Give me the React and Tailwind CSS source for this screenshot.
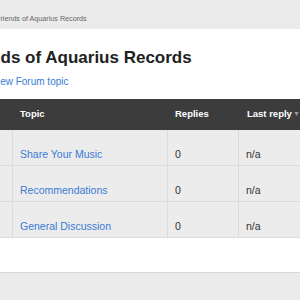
import React from "react";

const topics = [
  { title: "Share Your Music", replies: 0, last: "n/a" },
  { title: "Recommendations", replies: 0, last: "n/a" },
  { title: "General Discussion", replies: 0, last: "n/a" },
];

function App() {
  return (
    <div className="w-[300px] h-[300px] overflow-hidden bg-white flex flex-col font-['Liberation_Sans',Arial,sans-serif]">
      {/* breadcrumb bar */}
      <div className="h-[29px] shrink-0 bg-[#ebebeb] pt-[14px]">
        <p className="ml-[-4px] text-[7.2px] leading-[9px] text-[#666] whitespace-nowrap">Friends of Aquarius Records</p>
      </div>

      <h1 className="mt-[19px] ml-[-41px] text-[17px] leading-[20px] font-bold text-[#222] whitespace-nowrap">
        Friends of Aquarius Records
      </h1>
      <a href="#" className="mt-[8px] ml-[-26px] text-[10px] leading-[12px] text-[#3a7bd5] whitespace-nowrap">
        Add new Forum topic
      </a>

      <div className="mt-[11px] ml-[-20px] w-[360px]">
        <div className="grid grid-cols-[33px_155px_71px_101px] h-[31px] bg-[#3c3c3c] text-white text-[9.5px] font-bold items-center">
          <div />
          <div className="pl-[7px]">Topic</div>
          <div className="pl-[7px]">Replies</div>
          <div className="pl-[8px] flex items-center">
            Last reply
            <span className="ml-[1px] text-[7px] text-[#999]">▼</span>
          </div>
        </div>
        {topics.map((t) => (
          <div
            key={t.title}
            className="grid grid-cols-[33px_155px_71px_101px] h-[36px] bg-[#ececec] border-b border-[#dcdcdc] text-[10.5px] leading-[14px]"
          >
            <div className="border-r border-[#dcdcdc]" />
            <div className="pl-[7px] pt-[17px] border-r border-[#dcdcdc]">
              <a href="#" className="text-[#3a7bd5]">{t.title}</a>
            </div>
            <div className="pl-[7px] pt-[17px] border-r border-[#dcdcdc] text-[#333]">{t.replies}</div>
            <div className="pl-[7px] pt-[17px] text-[#333]">{t.last}</div>
          </div>
        ))}
      </div>

      <div className="h-[34px] shrink-0" />
      <div className="flex-1 bg-[#ebebeb] border-t border-[#d6d6d6]" />
    </div>
  );
}

export default App;
